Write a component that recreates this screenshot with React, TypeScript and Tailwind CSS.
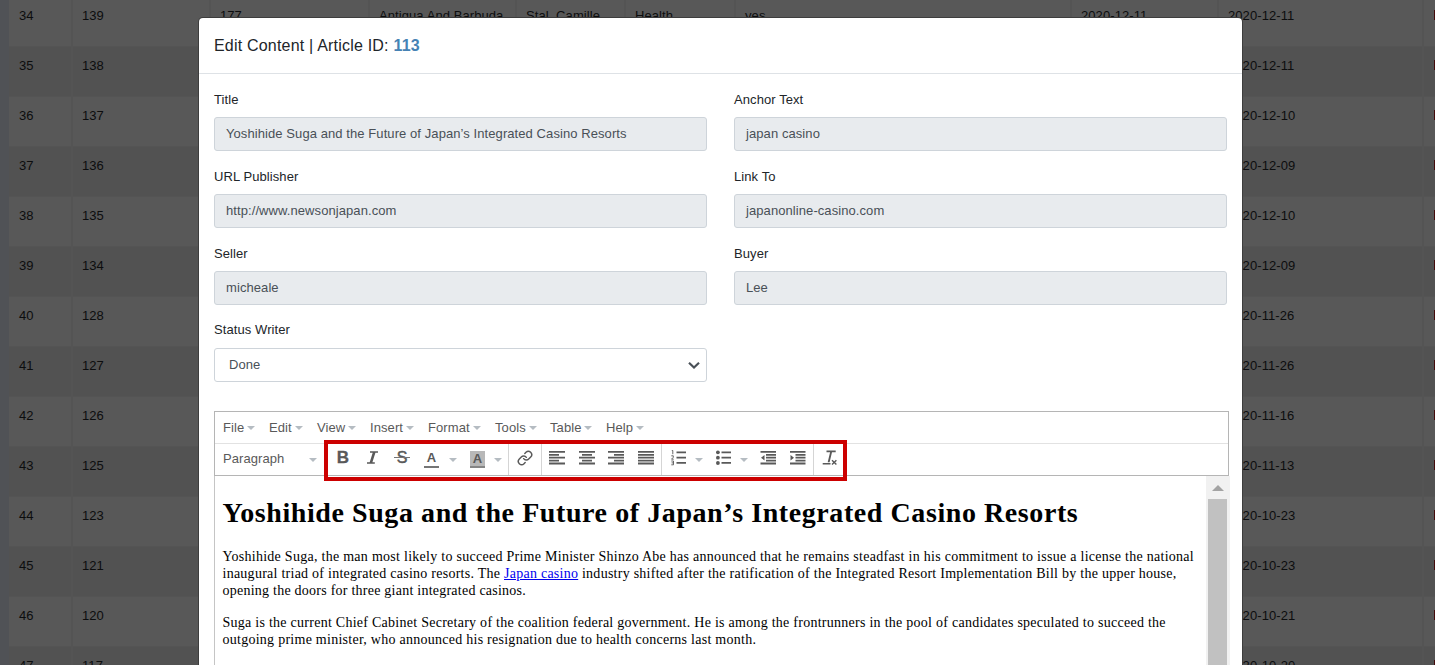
import React from "react";
import { Link } from "lucide-react";

type Row = [string, string, string];
const rows: Row[] = [
  ["34", "139", "2020-12-11"],
  ["35", "138", "2020-12-11"],
  ["36", "137", "2020-12-10"],
  ["37", "136", "2020-12-09"],
  ["38", "135", "2020-12-10"],
  ["39", "134", "2020-12-09"],
  ["40", "128", "2020-11-26"],
  ["41", "127", "2020-11-26"],
  ["42", "126", "2020-11-16"],
  ["43", "125", "2020-11-13"],
  ["44", "123", "2020-10-23"],
  ["45", "121", "2020-10-23"],
  ["46", "120", "2020-10-21"],
  ["47", "117", "2020-10-20"],
];

const menus = [
  ["File", "w-[46px]"],
  ["Edit", "w-[48px]"],
  ["View", "w-[53px]"],
  ["Insert", "w-[58px]"],
  ["Format", "w-[67px]"],
  ["Tools", "w-[55px]"],
  ["Table", "w-[56px]"],
  ["Help", "w-[50px]"],
];

const cell = "shrink-0 whitespace-nowrap border-r-2 border-[#545454] pl-[9px] pt-[9px]";

function TableRow({ row, first, odd }: { row: Row; first: boolean; odd: boolean }) {
  return (
    <div className={`flex h-[50px] border-b border-[#545454] ${odd ? "bg-[#525252]" : "bg-[#585858]"}`}>
      <div className="w-[64px] shrink-0 border-r-2 border-[#545454] pl-[10px] pt-[9px]">{row[0]}</div>
      <div className={`${cell} w-[138px]`}>{row[1]}</div>
      <div className={`${cell} w-[159px]`}>{first && "177"}</div>
      <div className={`${cell} w-[147px]`}>{first && "Antigua And Barbuda"}</div>
      <div className={`${cell} w-[109px]`}>{first && "Stal, Camille"}</div>
      <div className={`${cell} w-[110px]`}>{first && "Health"}</div>
      <div className={`${cell} w-[336px]`}>{first && "yes"}</div>
      <div className={`${cell} w-[147px]`}>{first && "2020-12-11"}</div>
      <div className={`${cell} w-[205px]`}>{row[2]}</div>
      <div className="ml-[10px] mt-[13px] h-[10px] w-[1px] bg-[#430a0a]" />
    </div>
  );
}

function Field({ label, value }: { label: string; value: string }) {
  return (
    <div className="flex h-[77px] w-[493px] flex-col">
      <label className="h-[27px] leading-[19px]">{label}</label>
      <div className="flex h-[34px] items-center rounded-[3px] border border-[#ced4da] bg-[#e8ebee] pl-[11px] text-[#495057]">
        {value}
      </div>
    </div>
  );
}

function Caret({ className = "" }: { className?: string }) {
  return (
    <span className={`h-0 w-0 shrink-0 border-x-[4px] border-t-[4px] border-x-transparent border-t-[#b5bcc2] ${className}`} />
  );
}

function Icon({ d, className = "", children }: { d: string; className?: string; children?: React.ReactNode }) {
  return (
    <svg width="16" height="16" viewBox="0 0 16 16" className={`shrink-0 ${className}`}>
      <path d={d} fill="currentColor" />
      {children}
    </svg>
  );
}

function Toolbar() {
  return (
    <div className="flex h-[31px] pl-[8px]">
      <div className="flex h-[29px] w-[94px] items-center justify-between">Paragraph<Caret className="mt-[2px]" /></div>
      <div className="ml-[7px] flex w-[185px] border-r border-[#d5d5d5] pl-[11px] pt-[6px]">
        <div className="h-4 w-4 text-center text-[17px] font-bold leading-[16px] tracking-normal [-webkit-text-stroke:0.300px_#595959]">B</div>
        <Icon className="ml-[14px]" d="M5 1.200h8v1.500h-2.600L7.400 12.300h2.400v1.500H2v-1.500h2.700L7.700 2.700H5z" />
        <div className="relative ml-[13px] h-4 w-4 text-center text-[16px] leading-[16px] tracking-normal [-webkit-text-stroke:0.500px_#595959]">
          S<span className="absolute left-0 top-[7px] h-[1px] w-[16px] bg-[#757575]" />
        </div>
        <div className="ml-[14px] h-[18px] w-[15px] border-b-2 border-[#757575] text-center text-[13px] font-bold leading-[16px] tracking-normal">A</div>
        <Caret className="ml-[10px] mt-[8px]" />
        <div className="ml-[13px] mt-[1px] h-[17px] w-[15px] border-b-2 border-[#858585] bg-[#b8b8b8] text-center text-[13px] font-bold leading-[15px] tracking-normal">A</div>
        <Caret className="ml-[9px] mt-[8px]" />
      </div>
      <div className="w-[33px] border-r border-[#d5d5d5] pl-[8px] pt-[6px]">
        <Link size={16} strokeWidth={2.200} />
      </div>
      <div className="flex w-[120px] border-r border-[#d5d5d5] pl-[7px] pt-[6px]">
        <Icon d="M0 1h16v1.800H0zM0 3.900h10v1.800H0zM0 6.800h16v1.800H0zM0 9.700h10v1.800H0zM0 12.600h16v1.800H0z" />
        <Icon className="ml-[14px]" d="M0 1h16v1.800H0zM3 3.900h10v1.800H3zM0 6.800h16v1.800H0zM3 9.700h10v1.800H3zM0 12.600h16v1.800H0z" />
        <Icon className="ml-[13px]" d="M0 1h16v1.800H0zM6 3.900h10v1.800H6zM0 6.800h16v1.800H0zM6 9.700h10v1.800H6zM0 12.600h16v1.800H0z" />
        <Icon className="ml-[14px]" d="M0 1h16v1.800H0zM0 3.900h16v1.800H0zM0 6.800h16v1.800H0zM0 9.700h16v1.800H0zM0 12.600h16v1.800H0z" />
      </div>
      <div className="flex w-[152px] border-r border-[#d5d5d5] pl-[9px] pt-[6px]">
        <Icon d="M5.500 1.500h9.500v1.700H5.500zM5.500 6.800h9.500v1.700H5.500zM5.500 12.100h9.500v1.700H5.500z">
          <path d="M.8.500h1v3.700M.3 5.800h2v1.500L.5 9.200h2.200M.3 11h2.200v3.800H.3M.6 12.900h1.800" fill="none" stroke="currentColor" strokeWidth="0.900" />
        </Icon>
        <Caret className="ml-[8px] mt-[8px]" />
        <Icon className="ml-[13px]" d="M5.500 1.500H15v1.700H5.500zM5.500 6.800H15v1.700H5.500zM5.500 12.100H15v1.700H5.500z">
          <circle cx="1.900" cy="2.300" r="1.900" fill="currentColor" />
          <circle cx="1.900" cy="7.700" r="1.900" fill="currentColor" />
          <circle cx="1.900" cy="13" r="1.900" fill="currentColor" />
        </Icon>
        <Caret className="ml-[8px] mt-[8px]" />
        <Icon className="ml-[12px]" d="M.5 1h15.500v1.800H.5zM6 3.900h10v1.800H6zM6 6.800h10v1.800H6zM6 9.700h10v1.800H6zM.5 12.600h15.500v1.800H.5zM4.500 5v5.500L1 7.700z" />
        <Icon className="ml-[14px]" d="M0 1h15.500v1.800H0zM5.500 3.900h10v1.800h-10zM5.500 6.800h10v1.800h-10zM5.500 9.700h10v1.800h-10zM0 12.600h15.500v1.800H0zM.5 5v5.500L4 7.700z" />
      </div>
      <div className="pl-[8px] pt-[6px]">
        <Icon d="M4.500.5h9.200v1.800h-3.700L7.600 12.200H5.700L8.100 2.300H4.500zM.7 12.900h7.800v1.500H.7z">
          <path d="M10 10.200l4.400 4.300M14.400 10.200l-4.400 4.300" stroke="currentColor" strokeWidth="1.400" />
        </Icon>
      </div>
    </div>
  );
}

export default function App() {
  return (
    <div className="relative h-[665px] w-[1435px] overflow-hidden bg-[#505256] font-['Liberation_Sans',Arial,sans-serif] text-[13px] leading-[20px] tracking-[0.080px] text-[#212529]">
      <div className="-mt-[3px] ml-[9px] w-[1500px] text-[#0c0d0e]">
        {rows.map((r, i) => (
          <TableRow key={r[0]} row={r} first={i === 0} odd={i % 2 === 1} />
        ))}
      </div>

      <div className="absolute left-[199px] top-[18px] h-[660px] w-[1043px] rounded-t-[4px] bg-white shadow-[0_0_0_1px_#3d3d3d]">
        <div className="flex h-[56px] items-center border-b border-[#dee2e6] pl-[15px] text-[16px] tracking-[0.200px]">
          <span>Edit Content | Article ID: <b className="text-[#4682b4]">113</b></span>
        </div>
        <div className="grid grid-cols-[520px_493px] pl-[15px] pt-[16px]">
          <Field label="Title" value="Yoshihide Suga and the Future of Japan’s Integrated Casino Resorts" />
          <Field label="Anchor Text" value="japan casino" />
          <Field label="URL Publisher" value="http://www.newsonjapan.com" />
          <Field label="Link To" value="japanonline-casino.com" />
          <Field label="Seller" value="micheale" />
          <Field label="Buyer" value="Lee" />
          <div className="w-[493px]">
            <label className="block h-[27px] leading-[18px]">Status Writer</label>
            <div className="flex h-[34px] items-center justify-between rounded-[3px] border border-[#ced4da] pl-[14px] pr-[6px] text-[#495057]">
              Done
              <svg width="12" height="8" viewBox="0 0 12 8">
                <path d="M1 1.800 6 6.500l5-4.700" fill="none" stroke="#495057" strokeWidth="2.200" />
              </svg>
            </div>
          </div>
        </div>

        <div className="ml-[15px] mt-[29px] w-[1016px] text-[#595959]">
          <div className="h-[65px] w-[1015px] border border-[#b5b5b5]">
            <div className="flex h-[32px] items-center border-b border-[#e2e2e2] pl-[8px]">
              {menus.map(([t, w]) => (
                <div key={t} className={`flex shrink-0 items-center gap-[3px] ${w}`}>{t}<Caret /></div>
              ))}
            </div>
            <Toolbar />
          </div>
          <div className="flex h-[189px] border-l border-[#c5c5c5]">
            <div className="w-[991px] pl-[7.500px] font-['Liberation_Serif','Times_New_Roman',serif] text-[14px] leading-[17px] tracking-[0.272px] text-black">
              <h1 className="mt-[20px] whitespace-nowrap text-[28px] font-bold leading-[34px] tracking-[0.580px]">Yoshihide Suga and the Future of Japan’s Integrated Casino Resorts</h1>
              <p className="mt-[18px] whitespace-nowrap">
                Yoshihide Suga, the man most likely to succeed Prime Minister Shinzo Abe has announced that he remains steadfast in his commitment to issue a license the national<br />
                <span className="tracking-[0.255px]">inaugural triad of integrated casino resorts. The <a className="text-[#0000ee] underline">Japan casino</a> industry shifted after the ratification of the Integrated Resort Implementation Bill by the upper house,</span><br />
                <span className="tracking-[0.240px]">opening the doors for three giant integrated casinos.</span>
              </p>
              <p className="mt-[15px] whitespace-nowrap tracking-[0.262px]">
                Suga is the current Chief Cabinet Secretary of the coalition federal government. He is among the frontrunners in the pool of candidates speculated to succeed the<br />
                outgoing prime minister, who announced his resignation due to health concerns last month.
              </p>
            </div>
            <div className="w-[24px] bg-[#f1f1f1] pl-[2px] pt-[9px]">
              <div className="ml-[4px] h-0 w-0 border-x-[6px] border-b-[6px] border-x-transparent border-b-[#a3a3a3]" />
              <div className="mt-[8px] h-[166px] w-[19px] bg-[#c1c1c1]" />
            </div>
          </div>
        </div>
      </div>

      <div className="absolute left-[324px] top-[440px] h-[41px] w-[523px] border-4 border-[#cc0000]" />
    </div>
  );
}
